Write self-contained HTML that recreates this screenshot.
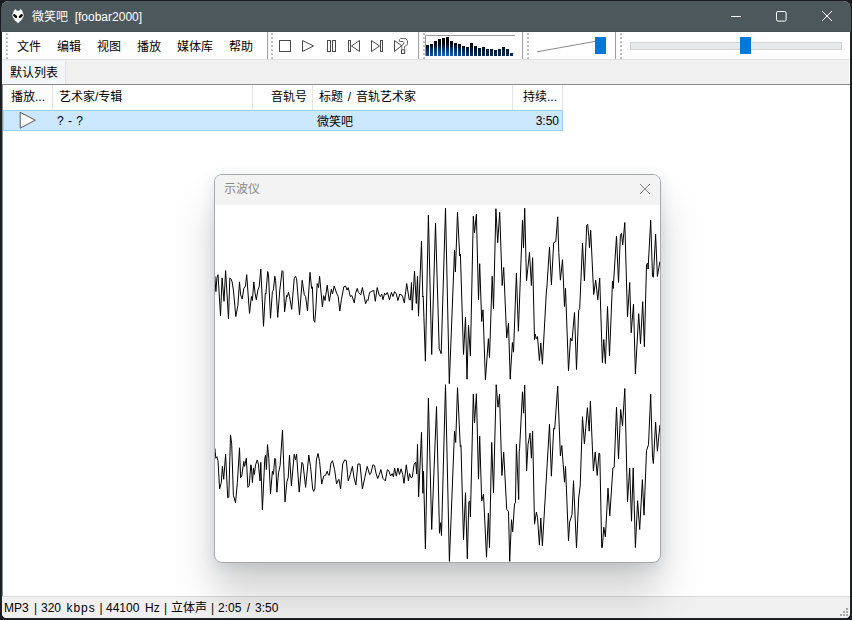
<!DOCTYPE html>
<html lang="zh-CN">
<head>
<meta charset="utf-8">
<title>微笑吧 [foobar2000]</title>
<style>
*{box-sizing:border-box;margin:0;padding:0}
html,body{width:852px;height:620px;overflow:hidden;background:#1a1d1f}
body{font-family:"Liberation Sans","Noto Sans CJK SC",sans-serif;font-size:12px;color:#000;position:relative}
.abs{position:absolute}
#frame{position:absolute;left:1px;top:1px;width:850px;height:618px;border-radius:8px;overflow:hidden;background:#1f2427}
#win{position:absolute;left:1px;top:0;width:848px;height:617px;background:#fff}
#titlebar{position:absolute;left:-1px;top:0;width:850px;height:31px;background:#4d585d;color:#fff;border-bottom:1px solid #465156}
#title{position:absolute;left:31px;top:8px;line-height:17px;white-space:pre;font-size:12px}
#toolbar{position:absolute;left:0;top:31px;width:848px;height:27px;background:#fff}
#tbline{position:absolute;left:0;top:58px;width:848px;height:1px;background:#e2e2e2}
#tabbar{position:absolute;left:0;top:59px;width:847px;height:24px;background:#f0f0f0}
#tab{position:absolute;left:0;top:1px;width:64px;height:23px;background:#f3f6fb;border-right:1px solid #e3e3e3;line-height:24px;padding-left:8px}
#list{position:absolute;left:0;top:83px;width:848px;height:512px;background:#fff;border-top:1px solid #8a8a8a;border-left:1px solid #8a8a8a;overflow:hidden}
.hd{position:absolute;top:0;height:25px;line-height:24px;border-right:1px solid #e5e5e5;white-space:nowrap;overflow:hidden}
#row{position:absolute;left:0;top:25px;width:560px;height:21px;background:#cce8ff;border:1px solid #99d1ff}
.cell{position:absolute;top:2px;line-height:19px;white-space:nowrap}
#statusline{position:absolute;left:0;top:595px;width:848px;height:1px;background:#d7d7d7}
#status{position:absolute;left:0;top:596px;width:848px;height:21px;background:#f0f0f0;line-height:20px;white-space:nowrap;font-size:0}
#status span{position:absolute;top:1px;font-size:12px;line-height:20px}
.menu{position:absolute;top:2px;line-height:27px;white-space:nowrap}
.vsep{position:absolute;top:0;width:1px;height:28px;background:#a0a0a0;box-shadow:1px 0 0 #f4f6fa}
.grip{position:absolute;top:1px;width:2px;height:26px;background:repeating-linear-gradient(to bottom,#cfcfcf 0,#cfcfcf 1px,#b4b4b4 1px,#b4b4b4 2px,transparent 2px,transparent 4px)}
#pop{position:absolute;left:213px;top:173px;width:447px;height:389px;border:1px solid #a9a9a9;border-radius:8px;background:#fff;overflow:hidden;box-shadow:0 30px 40px rgba(0,0,0,0.19),0 3px 14px rgba(50,70,110,0.13)}
#poptitle{position:absolute;left:0;top:0;width:445px;height:30px;background:#f3f3f3;color:#8a8a8a;line-height:28px;padding-left:9px}
</style>
</head>
<body>
<div id="frame">
<div id="win">
  <div id="titlebar">
    <svg class="abs" style="left:10px;top:6px" width="15" height="18" viewBox="11 7 15 18">
      <path d="M15.2 8.6 Q16.2 10.6 18 10.6 Q19.8 10.6 20.8 8.6 Q23 11 23.6 13.7 Q24.3 15 24 16.2 Q22.5 20.5 18 23.5 Q13.5 20.5 12 16.2 Q11.7 15 12.4 13.7 Q13 11 15.2 8.6Z" fill="#fff" stroke="#3a4347" stroke-width="0.6"/>
      <ellipse cx="15.15" cy="16.05" rx="2.5" ry="1.35" transform="rotate(42 15.15 16.05)" fill="#000"/>
      <ellipse cx="20.85" cy="16.05" rx="2.5" ry="1.35" transform="rotate(-42 20.85 16.05)" fill="#000"/>
      <ellipse cx="18" cy="19.8" rx="0.9" ry="0.45" fill="#b5b5b5"/>
    </svg>
    <div id="title">微笑吧  [foobar2000]</div>
    <svg class="abs" style="left:721px;top:0" width="128" height="31" viewBox="0 0 128 31" fill="none" stroke="#fff" stroke-width="1">
      <path d="M9 15.5 H19"/>
      <rect x="54.5" y="10.5" width="9.6" height="9.6" rx="1.5"/>
      <path d="M100 10 L110 20 M110 10 L100 20"/>
    </svg>
  </div>
  <div id="toolbar">
    <div class="grip" style="left:4px"></div>
    <div class="menu" style="left:15px">文件</div>
    <div class="menu" style="left:55px">编辑</div>
    <div class="menu" style="left:95px">视图</div>
    <div class="menu" style="left:135px">播放</div>
    <div class="menu" style="left:175px">媒体库</div>
    <div class="menu" style="left:227px">帮助</div>
    <div class="vsep" style="left:265px"></div>
    <div class="grip" style="left:269px"></div>
    <svg class="abs" style="left:270px;top:0" width="150" height="27" viewBox="272 32 150 27" fill="none" stroke="#4a4a4a" stroke-width="1">
      <rect x="279.5" y="40.5" width="11" height="11"/>
      <path d="M302.5 40.5 L313.5 46 L302.5 51.5Z"/>
      <rect x="327.5" y="40.5" width="3" height="11"/><rect x="332.5" y="40.5" width="3" height="11"/>
      <rect x="348.5" y="40.5" width="2" height="11"/><path d="M359.5 40.5 L351.5 46 L359.5 51.5Z"/>
      <path d="M371.5 40.5 L379.5 46 L371.5 51.5Z"/><rect x="380.5" y="40.5" width="2" height="11"/>
      <path d="M394.5 40.5 L401.6 45.7 L394.5 51.5Z"/><path d="M399.5 41.5 V39.6 L400.6 38.5 H405.5 L407.5 40.5 V44.5 L404.5 46.6 V48.8 M399.5 41.5 H403 L404 42.7 L403.4 44.3 L401.7 45.6 V48.8" stroke="#5a5a5a" stroke-width="0.9"/><rect x="401.5" y="49.8" width="3.2" height="3.6" stroke="#444"/>
    </svg>
    <div class="vsep" style="left:416px"></div>
    <div class="grip" style="left:421px"></div>
    <svg class="abs" style="left:422px;top:2px" width="94" height="25" viewBox="424 34 94 25"><defs><linearGradient id="sg" gradientUnits="userSpaceOnUse" x1="0" y1="36" x2="0" y2="56"><stop offset="0" stop-color="#000"/><stop offset="0.4" stop-color="#01050c"/><stop offset="1" stop-color="#082c5a"/></linearGradient><radialGradient id="sr" gradientUnits="userSpaceOnUse" cx="445" cy="58" r="30" gradientTransform="translate(445 58) scale(1 0.5) translate(-445 -58)"><stop offset="0" stop-color="#1a7ae0" stop-opacity="0.85"/><stop offset="1" stop-color="#1a7ae0" stop-opacity="0"/></radialGradient></defs><path d="M425.5 56 V35.5 H515" fill="none" stroke="#9a9a9a" stroke-width="1"/><g fill="url(#sg)"><rect x="426" y="45" width="3" height="11"/><rect x="430" y="44" width="3" height="12"/><rect x="434" y="41" width="3" height="15"/><rect x="438" y="39" width="3" height="17"/><rect x="442" y="38" width="3" height="18"/><rect x="446" y="37" width="3" height="19"/><rect x="450" y="41" width="3" height="15"/><rect x="454" y="43" width="3" height="13"/><rect x="458" y="44" width="3" height="12"/><rect x="462" y="46" width="3" height="10"/><rect x="466" y="47" width="3" height="9"/><rect x="470" y="43" width="3" height="13"/><rect x="474" y="46" width="3" height="10"/><rect x="478" y="48" width="3" height="8"/><rect x="482" y="47" width="3" height="9"/><rect x="486" y="49" width="3" height="7"/><rect x="490" y="49" width="3" height="7"/><rect x="494" y="50" width="3" height="6"/><rect x="498" y="49" width="3" height="7"/><rect x="502" y="47" width="3" height="9"/><rect x="506" y="49" width="3" height="7"/><rect x="510" y="53" width="3" height="3"/></g><g fill="url(#sr)"><rect x="426" y="45" width="3" height="11"/><rect x="430" y="44" width="3" height="12"/><rect x="434" y="41" width="3" height="15"/><rect x="438" y="39" width="3" height="17"/><rect x="442" y="38" width="3" height="18"/><rect x="446" y="37" width="3" height="19"/><rect x="450" y="41" width="3" height="15"/><rect x="454" y="43" width="3" height="13"/><rect x="458" y="44" width="3" height="12"/><rect x="462" y="46" width="3" height="10"/><rect x="466" y="47" width="3" height="9"/><rect x="470" y="43" width="3" height="13"/><rect x="474" y="46" width="3" height="10"/><rect x="478" y="48" width="3" height="8"/><rect x="482" y="47" width="3" height="9"/><rect x="486" y="49" width="3" height="7"/><rect x="490" y="49" width="3" height="7"/><rect x="494" y="50" width="3" height="6"/><rect x="498" y="49" width="3" height="7"/><rect x="502" y="47" width="3" height="9"/><rect x="506" y="49" width="3" height="7"/><rect x="510" y="53" width="3" height="3"/></g></svg>
    <div class="vsep" style="left:520px"></div>
    <div class="grip" style="left:525px"></div>
    <svg class="abs" style="left:533px;top:3px" width="76" height="22" viewBox="535 35 76 22"><path d="M537 51.8 L595.5 41.3" stroke="#8a8a8a" stroke-width="1" fill="none"/><rect x="595" y="37" width="11" height="17" fill="#0078d7"/></svg>
    <div class="vsep" style="left:613px"></div>
    <div class="grip" style="left:618px"></div>
    <div class="abs" style="left:628px;top:10px;width:212px;height:8px;background:#e7eaea;border:1px solid #d3d3d3"></div><div class="abs" style="left:738px;top:5px;width:11px;height:17px;background:#0078d7"></div>
  </div>
  <div id="tbline"></div>
  <div id="tabbar"><div id="tab">默认列表</div></div>
  <div id="list">
    <div class="hd" style="left:0;width:50px;padding-left:8px">播放...</div>
    <div class="hd" style="left:50px;width:200px;padding-left:6px">艺术家/专辑</div>
    <div class="hd" style="left:250px;width:60px;padding-right:5px;text-align:right">音轨号</div>
    <div class="hd" style="left:310px;width:200px;padding-left:6px;word-spacing:1.5px">标题 / 音轨艺术家</div>
    <div class="hd" style="left:510px;width:50px;padding-right:5px;text-align:right">持续...</div>
    <div id="row">
      <svg class="abs" style="left:14px;top:0" width="20" height="19" viewBox="0 0 20 19" fill="#fff" stroke="#555" stroke-width="1"><path d="M2.2 1.3 L17.3 9.2 L2.2 17.1Z"/></svg>
      <div class="cell" style="left:53px;top:1px;word-spacing:1px">? - ?</div>
      <div class="cell" style="left:313px">微笑吧</div>
      <div class="cell" style="right:3px;top:1px">3:50</div>
    </div>
  </div>
  <div id="statusline"></div>
  <div id="status"><span style="left:2.0px">MP3</span> <span style="left:32.1px">|</span> <span style="left:39.0px">320</span> <span style="left:64.6px;letter-spacing:0.9px">kbps</span> <span style="left:97.5px">|</span> <span style="left:104.0px">44100</span> <span style="left:143.0px">Hz</span> <span style="left:162.1px">|</span> <span style="left:169.0px">立体声</span> <span style="left:209.1px">|</span> <span style="left:216.0px">2:05</span> <span style="left:244.8px">/</span> <span style="left:253.0px">3:50</span><svg class="abs" style="left:836px;top:9px" width="12" height="12" viewBox="838 606 12 12" fill="#a9a9a9"><rect x="846" y="608" width="2" height="2"/><rect x="843" y="611" width="2" height="2"/><rect x="846" y="611" width="2" height="2"/><rect x="840" y="614" width="2" height="2"/><rect x="843" y="614" width="2" height="2"/><rect x="846" y="614" width="2" height="2"/></svg></div>
</div>
<div id="pop">
      <div id="poptitle">示波仪</div>
      <svg class="abs" style="left:424px;top:8px" width="12" height="12" viewBox="0 0 12 12" stroke="#858585" stroke-width="1" fill="none"><path d="M1 1 L11 11 M11 1 L1 11"/></svg>
      <svg class="abs" style="left:0;top:30px" width="445" height="357" viewBox="215 205 445 357" fill="none" stroke="#000" stroke-width="1" stroke-linejoin="round"><polyline points="214.0,288.4 214.8,276.3 215.9,291.6 216.9,277.9 218.0,274.7 220.5,315.8 222.1,277.9 224.0,301.3 225.6,270.6 228.5,319.0 229.8,277.9 230.9,278.7 232.1,281.9 233.4,290.0 235.8,316.6 237.9,305.3 239.5,281.9 240.6,294.8 242.2,298.9 243.8,288.4 245.5,286.0 246.7,274.7 249.5,313.4 251.4,296.5 252.4,300.5 253.8,281.9 255.1,293.2 256.3,299.7 257.9,290.0 259.2,286.8 260.8,269.0 263.5,326.3 265.3,293.2 265.9,294.0 267.7,271.5 268.5,274.7 270.5,318.2 272.4,291.6 273.4,290.0 274.8,276.3 275.6,280.3 277.7,317.4 279.8,290.0 282.1,270.6 283.0,271.5 284.6,311.8 286.6,295.6 287.4,296.5 288.5,292.4 289.5,296.5 291.7,309.4 294.2,278.7 295.5,276.3 296.6,278.7 299.5,315.0 302.2,280.3 304.3,294.8 305.6,296.5 307.5,311.0 310.0,272.3 311.6,288.4 312.4,286.8 313.7,319.8 314.8,322.3 315.9,307.7 317.2,283.5 318.5,287.6 319.6,276.3 322.4,306.9 323.7,295.6 325.0,300.5 327.2,285.2 329.3,301.3 331.4,289.2 332.5,294.0 334.2,286.0 336.6,293.2 338.2,296.5 339.8,311.0 341.4,299.7 343.8,286.8 345.5,286.0 347.1,290.0 348.2,287.6 350.3,296.5 351.9,295.6 354.3,302.9 355.6,293.2 357.2,288.4 358.4,292.4 360.8,294.8 362.4,287.6 365.6,303.7 367.2,299.7 368.0,300.5 369.6,292.4 371.3,291.6 372.9,290.8 373.7,290.0 375.3,301.3 377.2,287.6 379.3,295.6 380.5,296.5 381.7,294.0 383.0,299.7 384.6,293.2 385.8,294.8 387.4,292.4 389.5,299.7 391.4,292.4 393.0,296.5 394.6,291.6 396.3,294.0 397.9,300.5 399.8,294.0 402.4,295.6 404.3,302.9 406.7,283.5 409.2,299.7 410.3,300.0 411.5,282.5 412.2,310.2 414.5,271.2 416.3,303.5 417.5,276.5 418.5,316.2 421.5,241.2 422.8,297.0 423.2,296.0 425.4,361.2 428.4,215.3 431.7,354.5 435.5,223.2 439.2,348.5 441.2,353.7 445.5,208.2 449.3,383.7 454.5,250.2 455.4,272.0 457.5,212.3 459.7,256.0 460.4,254.0 463.5,354.5 465.5,317.0 467.0,379.2 468.5,325.2 470.4,356.0 473.3,216.2 474.5,233.0 476.4,214.2 478.5,299.7 479.7,263.7 481.7,321.5 483.0,309.8 485.4,380.0 488.4,338.7 489.5,357.5 492.2,276.2 493.5,308.7 495.9,208.7 497.7,242.7 499.7,212.3 502.2,285.5 503.7,267.5 506.7,338.0 508.5,323.3 510.2,379.2 512.4,342.5 513.5,352.2 516.4,273.2 518.4,331.2 522.5,220.2 523.5,248.0 524.7,208.2 526.5,281.0 529.5,252.5 531.4,285.5 532.6,257.7 534.5,339.5 535.2,334.2 536.3,338.7 537.5,336.5 539.4,360.5 540.8,343.2 542.4,364.2 546.4,291.0 546.9,287.0 549.5,247.2 551.4,284.7 553.7,242.7 555.8,241.5 557.7,216.8 558.8,252.5 560.4,280.2 562.5,259.7 564.5,306.5 565.5,288.2 568.5,371.0 570.5,338.0 572.0,341.0 574.5,312.5 576.5,369.5 578.7,310.2 579.7,308.7 582.5,243.2 584.4,281.0 586.7,225.5 587.7,224.3 588.8,236.7 589.5,247.7 590.7,230.3 593.7,294.5 595.7,280.2 597.8,299.7 599.7,278.0 602.4,362.7 603.8,339.5 605.4,363.5 607.5,306.5 609.5,356.0 612.5,281.0 613.2,288.5 616.5,236.0 618.5,282.5 620.4,235.2 621.5,233.4 622.7,245.0 624.8,222.5 627.5,317.0 629.7,282.5 631.2,332.7 633.5,304.2 635.4,374.0 638.7,313.7 640.5,343.7 642.7,301.7 644.4,346.7 646.5,264.5 647.7,263.0 648.1,269.0 650.7,220.2 652.5,276.5 653.4,277.2 655.6,234.2 657.4,276.5 659.9,261.5"/><polyline points="214.0,459.9 214.8,448.6 215.9,458.3 216.9,456.7 218.0,460.7 219.6,489.0 221.3,482.5 222.4,466.4 223.7,479.3 225.6,454.3 227.7,497.8 228.8,497.0 230.5,434.9 231.7,443.8 233.4,495.4 235.5,502.7 237.4,482.5 239.5,447.8 240.6,477.7 241.7,476.1 243.8,461.5 244.6,466.4 246.3,458.3 247.9,487.4 249.2,485.7 250.8,464.8 251.4,466.4 252.4,482.5 253.5,468.0 254.3,474.5 255.6,464.8 257.2,459.9 258.4,464.0 260.0,480.9 260.8,462.4 262.4,509.9 264.8,458.3 265.6,455.1 266.4,469.6 267.5,444.6 268.8,458.3 270.5,493.8 272.4,471.2 273.4,474.5 274.8,458.3 275.6,459.1 276.9,492.2 278.5,472.8 280.1,465.6 282.5,430.1 285.0,501.9 286.9,481.7 288.2,477.7 289.5,455.1 291.4,485.7 294.2,454.3 295.5,459.9 296.6,454.3 299.2,492.2 301.9,462.4 303.0,464.0 305.6,487.4 308.8,455.1 310.5,466.4 312.7,489.0 313.7,491.4 314.8,489.0 316.4,459.9 318.0,453.5 319.6,461.5 321.7,484.1 323.7,476.1 325.6,475.3 327.2,471.2 328.2,474.5 329.3,475.3 330.9,463.2 332.5,460.7 334.6,469.6 336.6,484.1 338.2,480.1 339.0,479.3 340.6,489.0 342.7,464.0 344.6,459.9 346.3,460.7 348.2,480.9 350.3,474.5 352.4,466.4 354.0,477.7 355.9,484.9 357.9,464.0 360.0,464.0 362.4,489.0 364.8,477.7 367.2,466.4 369.6,474.5 370.8,473.6 372.9,464.8 374.5,465.6 376.1,473.6 377.7,478.5 379.3,474.5 380.9,469.6 383.0,478.5 385.3,480.9 387.4,469.6 389.0,471.2 390.6,476.1 392.2,473.6 393.4,476.9 394.6,468.0 396.3,476.1 397.9,468.0 399.5,474.5 401.1,468.8 402.7,474.5 404.0,483.3 406.3,464.8 408.4,480.9 409.5,473.6 410.9,477.6 412.3,477.0 414.0,464.8 415.7,462.0 416.7,474.1 417.5,444.5 418.6,496.8 421.5,432.3 422.9,493.3 423.5,471.0 425.4,549.0 428.4,398.2 431.7,529.5 436.5,406.5 439.5,533.2 440.7,522.7 441.5,535.5 445.5,384.7 449.4,561.4 454.5,431.2 455.7,442.5 457.5,387.7 460.3,446.5 461.0,445.5 463.5,540.0 465.5,492.7 467.3,558.7 468.9,501.7 469.8,501.0 470.4,516.7 473.3,394.2 474.5,423.0 476.4,393.7 478.5,479.2 479.7,436.2 481.7,501.0 483.5,494.2 486.5,557.2 488.4,513.0 489.5,547.5 491.7,442.5 493.5,492.7 496.2,384.7 498.0,407.2 499.5,394.2 501.9,475.5 503.7,452.2 506.7,509.2 508.5,511.5 509.7,561.4 511.5,519.7 512.7,531.7 514.5,504.0 515.5,502.5 516.4,444.0 518.7,499.5 519.2,452.0 519.6,448.5 522.5,391.8 523.6,413.2 524.7,385.0 526.6,471.0 528.0,444.7 530.0,433.2 531.4,458.2 532.6,431.2 534.5,524.2 536.4,512.2 537.5,517.5 539.4,545.2 540.8,518.2 542.4,545.7 549.5,424.2 551.4,476.2 553.7,428.2 554.7,429.0 557.7,386.2 560.4,456.0 561.8,445.5 564.5,482.2 565.5,466.5 568.5,540.7 569.7,522.0 572.0,514.5 573.5,480.7 576.5,548.0 578.7,498.0 580.2,486.0 582.5,416.7 584.4,444.0 587.4,407.7 589.2,431.2 590.4,401.2 593.4,471.0 595.2,452.2 597.2,475.5 599.0,453.0 599.8,454.0 601.7,547.5 602.3,547.5 603.8,527.2 605.4,537.0 608.0,488.2 609.8,515.7 612.9,468.0 614.2,467.2 616.5,407.2 618.5,459.0 620.7,409.5 622.5,426.0 624.8,388.5 627.5,501.7 629.7,468.0 631.5,521.2 633.2,468.0 635.4,547.5 637.6,500.7 639.7,529.5 642.4,479.7 644.0,515.2 646.5,450.7 648.5,444.7 650.7,394.2 652.5,457.5 653.4,463.5 655.6,422.2 657.4,451.2 659.9,425.2"/></svg>
    </div>
</div>
</body>
</html>
